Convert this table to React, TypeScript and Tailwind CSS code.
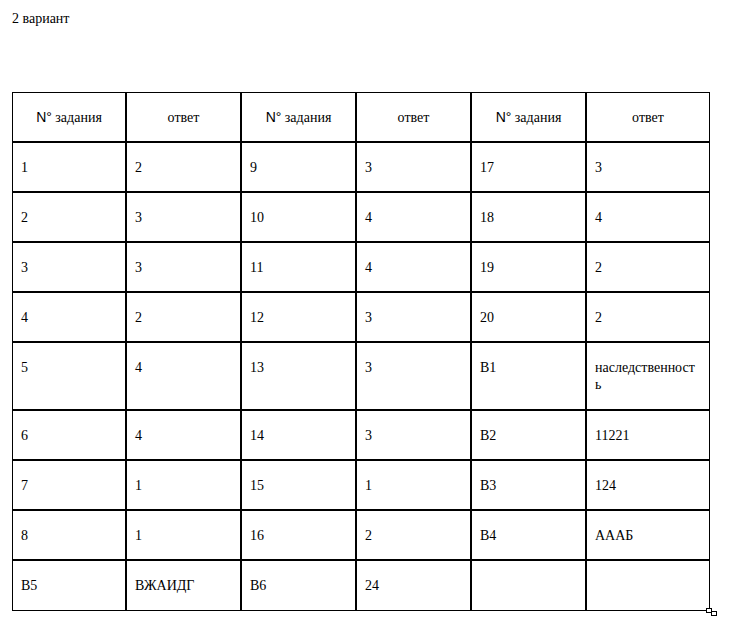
import React from "react";

const rows: string[][] = [
  ["1", "2", "9", "3", "17", "3"],
  ["2", "3", "10", "4", "18", "4"],
  ["3", "3", "11", "4", "19", "2"],
  ["4", "2", "12", "3", "20", "2"],
  ["5", "4", "13", "3", "B1", "наследственность"],
  ["6", "4", "14", "3", "B2", "11221"],
  ["7", "1", "15", "1", "B3", "124"],
  ["8", "1", "16", "2", "B4", "АААБ"],
  ["B5", "ВЖАИДГ", "B6", "24", "", ""],
];

function Header({ kind, last }: { kind: "n" | "o"; last?: boolean }) {
  return (
    <div
      className={
        "border-b-2 border-black pt-4 pb-[15px] text-center leading-[17px] " +
        (last ? "" : "border-r-2")
      }
    >
      {kind === "n" ? (
        <>
          <span className="font-[family-name:'Liberation_Sans',Arial,sans-serif] text-[14px]">N°</span>{" "}
          <span>задания</span>
        </>
      ) : (
        <span>ответ</span>
      )}
    </div>
  );
}

export default function App() {
  return (
    <div className="relative h-[622px] w-[729px] bg-white font-[family-name:'Liberation_Serif','Times_New_Roman',serif] text-[14px] text-black">
      <div className="pl-3 pt-[10px] leading-[17px]">2 вариант</div>
      <div className="relative ml-3 mt-[65px] w-[698px] border border-black">
        <div className="grid grid-cols-[114px_115px_115px_115px_115px_122px]">
          <Header kind="n" />
          <Header kind="o" />
          <Header kind="n" />
          <Header kind="o" />
          <Header kind="n" />
          <Header kind="o" last />
          {rows.map((r, ri) =>
            r.map((c, ci) => (
              <div
                key={ri + "-" + ci}
                className={
                  "border-black pl-2 pr-3 pt-4 leading-[17px] break-all " +
                  (ri === 4 || ri === rows.length - 1 ? "pb-4 " : "pb-[15px] ") +
                  (ci < 5 ? "border-r-2 " : "") +
                  (ri < rows.length - 1 ? "border-b-2" : "")
                }
              >
                {c}
              </div>
            ))
          )}
        </div>
        <svg
          className="absolute -bottom-[6px] -right-[9px]"
          width="12"
          height="8"
          viewBox="0 0 12 8"
        >
          <rect x="0.5" y="0.5" width="5" height="4" fill="white" stroke="black" strokeWidth="1" />
          <rect x="5.5" y="3.5" width="5" height="4" fill="white" stroke="black" strokeWidth="1" />
        </svg>
      </div>
    </div>
  );
}
